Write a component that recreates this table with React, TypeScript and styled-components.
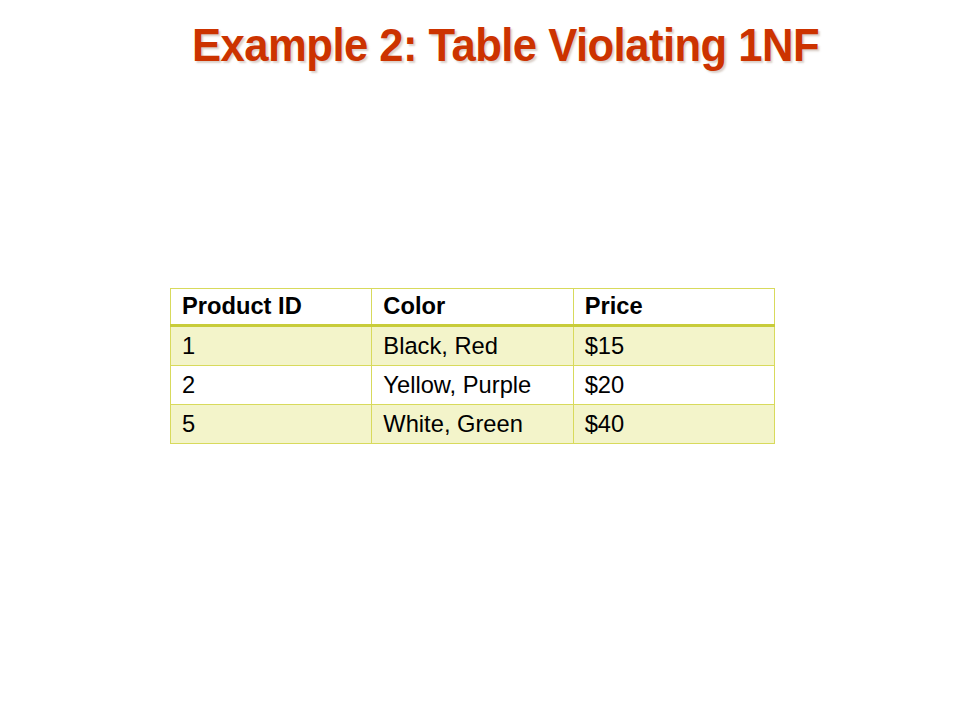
import React from "react";
import styled, { createGlobalStyle } from "styled-components";

const Global = createGlobalStyle`
  html, body { margin: 0; padding: 0; background: #ffffff; }
  body { font-family: "Liberation Sans", Arial, sans-serif; }
`;

const Slide = styled.div`
  width: 960px;
  height: 720px;
  background: #ffffff;
  display: flex;
  flex-direction: column;
  overflow: hidden;
`;

const Title = styled.h1`
  margin: 0;
  padding: 18px 0 0 192px;
  font-family: "Liberation Sans", Arial, sans-serif;
  font-weight: 700;
  font-size: 47px;
  line-height: 54px;
  color: #cc3300;
  letter-spacing: -0.6px;
  text-shadow: 2px 2px 2px rgba(150, 120, 100, 0.35);
  white-space: nowrap;
  transform: scaleX(0.929);
  transform-origin: 192px 0;
`;

const TableWrap = styled.div`
  margin: 216px 0 0 170px;
`;

const Table = styled.table`
  width: 605px;
  border-collapse: collapse;
  font-family: "Liberation Sans", Arial, sans-serif;
  font-size: 23.7px;
  color: #000000;
`;

const HeadCell = styled.th`
  text-align: left;
  font-weight: 700;
  height: 37px;
  padding: 0 0 0 11px;
  border: 1px solid #d8da5c;
  border-bottom: 3px solid #c8cc3a;
  background: #ffffff;
  width: 33.33%;
  box-sizing: border-box;
`;

const Cell = styled.td<{ $shaded: boolean }>`
  height: 38px;
  padding: 0 0 0 11px;
  border: 1px solid #d8da5c;
  background: ${(p) => (p.$shaded ? "#f3f4ca" : "#ffffff")};
`;

const rows = [
  ["1", "Black, Red", "$15"],
  ["2", "Yellow, Purple", "$20"],
  ["5", "White, Green", "$40"],
];

export default function App() {
  return (
    <Slide>
      <Global />
      <Title>Example 2: Table Violating 1NF</Title>
      <TableWrap>
        <Table>
          <thead>
            <tr>
              <HeadCell>Product ID</HeadCell>
              <HeadCell>Color</HeadCell>
              <HeadCell>Price</HeadCell>
            </tr>
          </thead>
          <tbody>
            {rows.map((r, i) => (
              <tr key={i}>
                {r.map((c, j) => (
                  <Cell key={j} $shaded={i % 2 === 0}>
                    {c}
                  </Cell>
                ))}
              </tr>
            ))}
          </tbody>
        </Table>
      </TableWrap>
    </Slide>
  );
}
